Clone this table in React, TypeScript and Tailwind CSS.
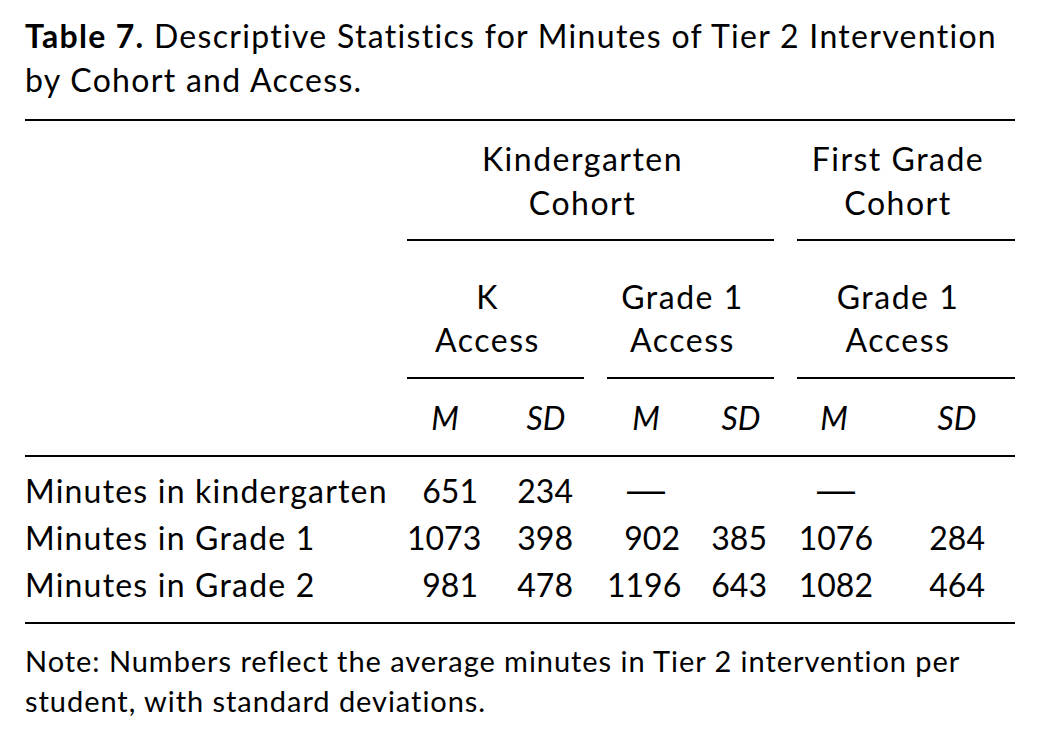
import React from "react";

const GRID = "grid grid-cols-[382px_88px_89px_23px_83px_84px_23px_109px_109px]";

type Cell = { v: string; pr: string; dash?: boolean };

const rows: { label: string; cells: Cell[] }[] = [
  {
    label: "Minutes in kindergarten",
    cells: [
      { v: "651", pr: "pr-[17px]" },
      { v: "234", pr: "pr-[11px]" },
      { v: "—", pr: "pr-[25px]", dash: true },
      { v: "", pr: "pr-[7px]" },
      { v: "—", pr: "pr-[51px]", dash: true },
      { v: "", pr: "pr-[30px]" },
    ],
  },
  {
    label: "Minutes in Grade 1",
    cells: [
      { v: "1073", pr: "pr-[17px]" },
      { v: "398", pr: "pr-[11px]" },
      { v: "902", pr: "pr-[10px]" },
      { v: "385", pr: "pr-[7px]" },
      { v: "1076", pr: "pr-[33px]" },
      { v: "284", pr: "pr-[30px]" },
    ],
  },
  {
    label: "Minutes in Grade 2",
    cells: [
      { v: "981", pr: "pr-[17px]" },
      { v: "478", pr: "pr-[11px]" },
      { v: "1196", pr: "pr-[10px]" },
      { v: "643", pr: "pr-[7px]" },
      { v: "1082", pr: "pr-[33px]" },
      { v: "464", pr: "pr-[30px]" },
    ],
  },
];

const colStarts = [
  "col-start-2",
  "col-start-3",
  "col-start-5",
  "col-start-6",
  "col-start-8",
  "col-start-9",
];

export default function App() {
  return (
    <div
      className="w-[1041px] h-[743px] bg-white text-black overflow-hidden"
      style={{ fontFamily: "Lato, 'Noto Sans', sans-serif" }}
    >
      <div className="pl-[25px] pr-[26px] pt-[14px]">
        <p className="text-[32px] leading-[44px] tracking-[1.3px] m-0 whitespace-nowrap">
          <span className="font-bold">Table 7.</span> Descriptive Statistics for Minutes of Tier 2 Intervention
          <br />
          by Cohort and Access.
        </p>

        <div className="mt-[17px] h-[2px] bg-black" />

        {/* Cohort headers */}
        <div className={`${GRID} mt-[16px] text-[32px] leading-[44px] tracking-[1.5px]`}>
          <div className="col-start-2 col-span-5 text-center pr-[16px]">
            Kindergarten
            <br />
            Cohort
          </div>
          <div className="col-start-8 col-span-2 text-center pr-[16px]">
            First Grade
            <br />
            Cohort
          </div>
        </div>

        <div className={`${GRID} mt-[14px]`}>
          <div className="col-start-2 col-span-5 h-[2px] bg-black" />
          <div className="col-start-8 col-span-2 h-[2px] bg-black" />
        </div>

        {/* Access headers */}
        <div className={`${GRID} mt-[34px] text-[32px] leading-[43px] tracking-[1.5px]`}>
          <div className="col-start-2 col-span-2 text-center pr-[16px]">
            K
            <br />
            Access
          </div>
          <div className="col-start-5 col-span-2 text-center pr-[16px]">
            Grade 1
            <br />
            Access
          </div>
          <div className="col-start-8 col-span-2 text-center pr-[16px]">
            Grade 1
            <br />
            Access
          </div>
        </div>

        <div className={`${GRID} mt-[16px]`}>
          <div className="col-start-2 col-span-2 h-[2px] bg-black" />
          <div className="col-start-5 col-span-2 h-[2px] bg-black" />
          <div className="col-start-8 col-span-2 h-[2px] bg-black" />
        </div>

        {/* M / SD */}
        <div className={`${GRID} mt-[17px] text-[32px] leading-[43px] italic`}>
          <div className="col-start-2 text-center pr-[12px]">M</div>
          <div className="col-start-3 text-center pl-[13px]">SD</div>
          <div className="col-start-5 text-center pr-[5px]">M</div>
          <div className="col-start-6 text-center pl-[18px]">SD</div>
          <div className="col-start-8 text-center pr-[35px]">M</div>
          <div className="col-start-9 text-center pr-[7px]">SD</div>
        </div>

        <div className="mt-[16px] h-[2px] bg-black" />

        {/* Data rows */}
        <div className={`${GRID} mt-[10px] text-[32px] leading-[47px]`}>
          {rows.map((r) => (
            <React.Fragment key={r.label}>
              <div className="col-start-1 whitespace-nowrap tracking-[1.2px]">{r.label}</div>
              {r.cells.map((c, i) => (
                <div key={i} className={`${colStarts[i]} text-right ${c.pr}`}>
                  {c.dash ? (
                    <span
                      className="text-[38px] leading-[0]"
                      style={{ fontFamily: "'Liberation Sans', Arial, sans-serif" }}
                    >
                      {c.v}
                    </span>
                  ) : (
                    c.v
                  )}
                </div>
              ))}
            </React.Fragment>
          ))}
        </div>

        <div className="mt-[14px] h-[2px] bg-black" />

        <p className="mt-[17px] text-[29px] leading-[40px] tracking-[0.95px] m-0 whitespace-nowrap">
          Note: Numbers reflect the average minutes in Tier 2 intervention per
          <br />
          student, with standard deviations.
        </p>
      </div>
    </div>
  );
}
